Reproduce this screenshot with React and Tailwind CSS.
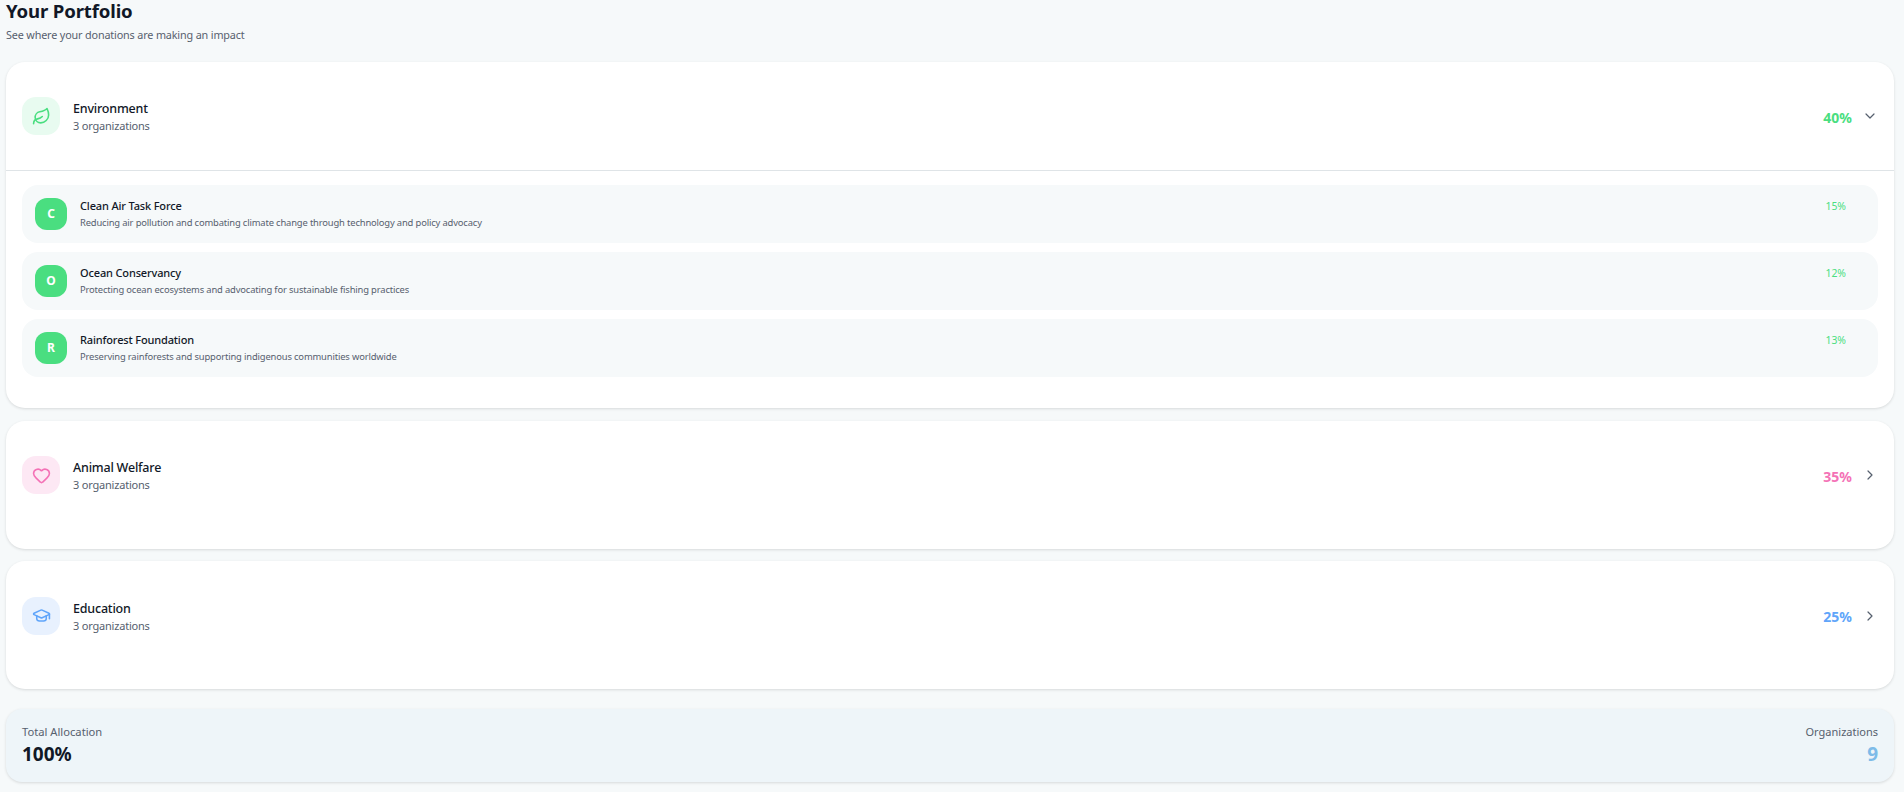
import React from "react";
import { ChevronDown, ChevronRight, GraduationCap, Heart, Leaf } from "lucide-react";

const categories = [
    {
        name: "Environment",
        percent: "40%",
        open: true,
        Icon: Leaf,
        iconClass: "bg-[#e8fbf0] text-[#4ade80]",
        percentClass: "text-[#4ade80]",
        orgs: [
            { letter: "C", name: "Clean Air Task Force", text: "Reducing air pollution and combating climate change through technology and policy advocacy", percent: "15%" },
            { letter: "O", name: "Ocean Conservancy", text: "Protecting ocean ecosystems and advocating for sustainable fishing practices", percent: "12%" },
            { letter: "R", name: "Rainforest Foundation", text: "Preserving rainforests and supporting indigenous communities worldwide", percent: "13%" },
        ],
    },
    {
        name: "Animal Welfare",
        percent: "35%",
        Icon: Heart,
        iconClass: "bg-[#fde8f4] text-[#f472b6]",
        percentClass: "text-[#f472b6]",
    },
    {
        name: "Education",
        percent: "25%",
        Icon: GraduationCap,
        iconClass: "bg-[#e8f1fe] text-[#60a5fa]",
        percentClass: "text-[#60a5fa]",
    },
];

function OrgRow({ org }) {
    return (
        <div className="flex h-[58px] items-center rounded-[16px] bg-[#f6f9fa] pl-[13px] pr-[32px]">
            <div className="flex h-8 w-8 shrink-0 items-center justify-center rounded-[12px] bg-[#4ade80] text-[12px] font-bold text-white">
                {org.letter}
            </div>
            <div className="ml-[13px] flex-1">
                <div className="text-[11px] leading-[17px] tracking-[-0.15px] font-medium text-[#111827]">{org.name}</div>
                <div className="text-[9.4px] leading-[18px] tracking-[-0.15px] text-[#56606e]">{org.text}</div>
            </div>
            <div className="mb-[14px] text-[10.4px] text-[#4ade80]">{org.percent}</div>
        </div>
    );
}

function CategoryCard({ category }) {
    const { Icon } = category;
    return (
        <div className={`rounded-[19px] bg-white shadow-[0_1px_3px_rgba(0,0,0,0.13)] ${category.open ? "pb-[31px]" : "pb-[19px]"}`}>
            <div className={`flex h-[109px] items-center pl-4 pr-4 ${category.open ? "border-b border-[#dfe4e7]" : ""}`}>
                <div className={`flex h-[38px] w-[38px] items-center justify-center rounded-[14px] ${category.iconClass}`}>
                    <Icon size={19} strokeWidth={2} />
                </div>
                <div className="ml-[13px] flex-1 pt-[3px]">
                    <div className="text-[12.5px] leading-[16px] tracking-[-0.2px] font-medium text-[#111827]">{category.name}</div>
                    <div className="text-[11px] leading-[17px] tracking-[-0.2px] text-[#56606e]">3 organizations</div>
                </div>
                <div className={`pt-[2px] text-[14px] font-bold ${category.percentClass}`}>{category.percent}</div>
                <div className="ml-[10px] text-[#56606e]">
                    {category.open ? <ChevronDown size={16} strokeWidth={1.8} /> : <ChevronRight size={16} strokeWidth={1.8} />}
                </div>
            </div>
            {category.open && (
                <div className="flex flex-col gap-[9px] px-4 pt-[14px]">
                    {category.orgs.map((org) => (
                        <OrgRow key={org.name} org={org} />
                    ))}
                </div>
            )}
        </div>
    );
}

export default function App() {
    return (
        <div className="min-h-[792px] bg-[#f6f9fa] pl-[6px] pr-[10px] font-['Noto_Sans',sans-serif]">
            <h1 className="text-[18.6px] leading-[22px] tracking-[-0.15px] font-bold text-[#111827]">Your Portfolio</h1>
            <p className="mt-[5px] text-[10.8px] leading-[16px] tracking-[-0.15px] text-[#56606e]">See where your donations are making an impact</p>

            <div className="mt-[19px] flex flex-col gap-[12.6px]">
                {categories.map((category) => (
                    <CategoryCard key={category.name} category={category} />
                ))}
            </div>

            <div className="mt-[19.6px] flex h-[73px] items-center justify-between rounded-[16px] bg-[#eef5f9] px-4 shadow-[0_1px_3px_rgba(0,0,0,0.13)]">
                <div className="pt-[2px]">
                    <div className="text-[11.2px] leading-[17px] text-[#56606e]">Total Allocation</div>
                    <div className="text-[19px] leading-[29px] font-bold text-[#111827]">100%</div>
                </div>
                <div className="pt-[2px] text-right">
                    <div className="text-[11px] leading-[17px] text-[#56606e]">Organizations</div>
                    <div className="text-[19px] leading-[29px] font-bold text-[#7dbbe8]">9</div>
                </div>
            </div>
        </div>
    );
}
